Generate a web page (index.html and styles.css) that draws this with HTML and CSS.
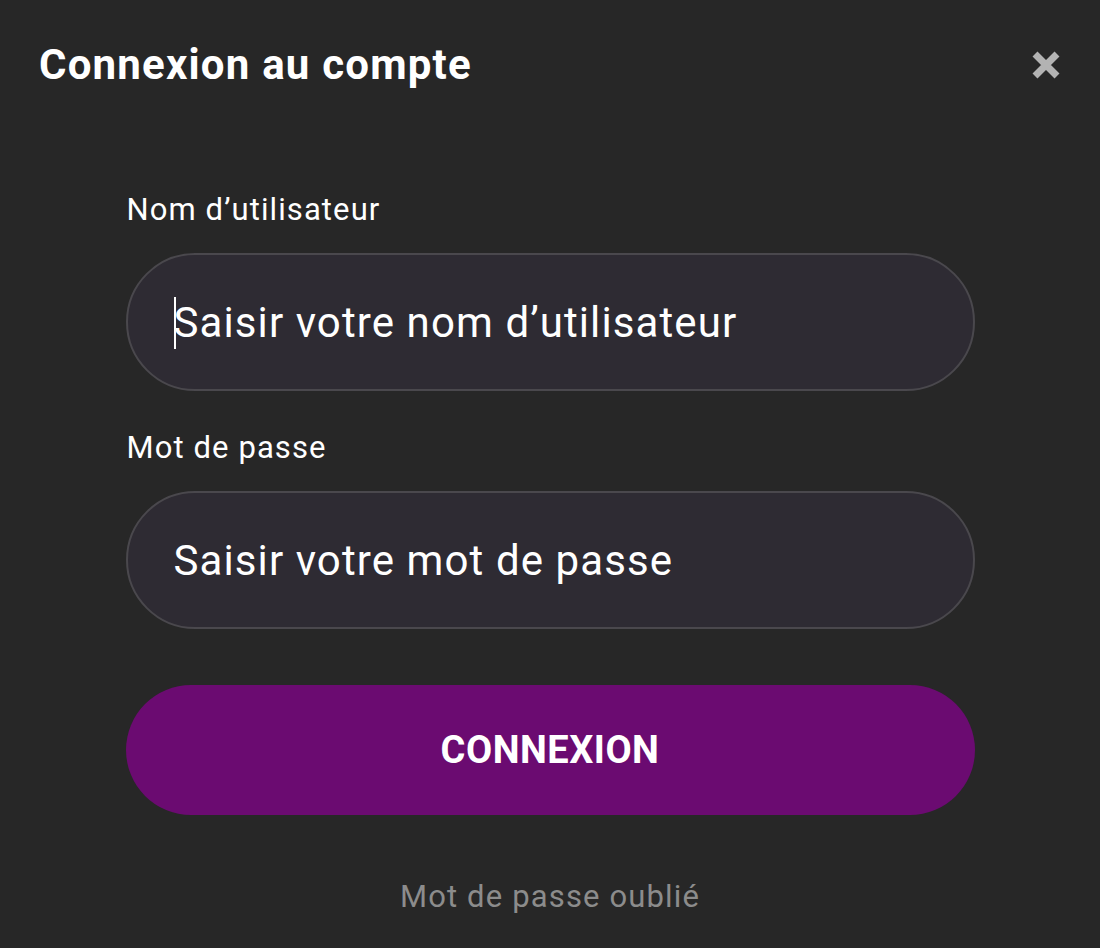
FILE: index.html
```html
<!DOCTYPE html>
<html lang="fr">
<head>
<meta charset="utf-8">
<title>Connexion au compte</title>
<link rel="stylesheet" href="styles.css">
</head>
<body>
<div class="modal">
  <header class="modal-head">
    <h1 class="title">Connexion au compte</h1>
    <button class="close" aria-label="Fermer">
      <svg viewBox="0 0 32 32" width="32" height="32"><path d="M5 5 L27 27 M27 5 L5 27" stroke="#b3b3b3" stroke-width="7" stroke-linecap="butt"/></svg>
    </button>
  </header>
  <form class="form">
    <label class="label" for="u">Nom d’utilisateur</label>
    <div class="field focused"><span class="caret"></span><span class="placeholder">Saisir votre nom d’utilisateur</span></div>
    <label class="label" for="p">Mot de passe</label>
    <div class="field"><span class="placeholder">Saisir votre mot de passe</span></div>
    <button type="button" class="submit">CONNEXION</button>
    <a class="forgot">Mot de passe oublié</a>
  </form>
</div>
</body>
</html>
```

FILE: styles.css
```css
html, body {
  margin: 0;
  padding: 0;
  background: #272727;
}
body {
  font-family: Roboto, "Noto Sans", sans-serif;
  color: #ffffff;
  width: 1100px;
  height: 948px;
  overflow: hidden;
}
.modal {
  display: flex;
  flex-direction: column;
}
.modal-head {
  display: flex;
  justify-content: space-between;
  align-items: center;
  padding: 38px 38px 0 39px;
  height: 54px;
}
.title {
  margin: 0;
  font-size: 42px;
  font-weight: 700;
  line-height: 54px;
  letter-spacing: 1.2px;
}
.close {
  background: none;
  border: 0;
  padding: 0;
  width: 32px;
  height: 32px;
  display: flex;
}
.form {
  width: 849px;
  margin: 0 auto;
  display: flex;
  flex-direction: column;
  padding-top: 98px;
}
.label {
  font-size: 31px;
  line-height: 40px;
  letter-spacing: 1.1px;
  margin-bottom: 23px;
  padding-left: 1px;
}
.field {
  box-sizing: border-box;
  height: 138px;
  border: 2px solid #4a484d;
  background: #2e2b33;
  border-radius: 70px;
  display: flex;
  align-items: center;
  padding-left: 46px;
  margin-bottom: 37px;
  position: relative;
}
.placeholder {
  font-size: 42px;
  letter-spacing: 1.1px;
  color: #ffffff;
}
.caret {
  position: absolute;
  left: 46px;
  top: 42px;
  width: 2px;
  height: 52px;
  background: #ffffff;
}
.submit {
  margin-top: 19px;
  height: 130px;
  border: 0;
  border-radius: 66px;
  background: #6b0b71;
  color: #ffffff;
  font-family: Roboto, sans-serif;
  font-weight: 700;
  font-size: 38px;
  letter-spacing: 0.5px;
}
.forgot {
  margin-top: 63px;
  text-align: center;
  font-size: 31px;
  letter-spacing: 1.15px;
  color: #8c8c8c;
}
```
